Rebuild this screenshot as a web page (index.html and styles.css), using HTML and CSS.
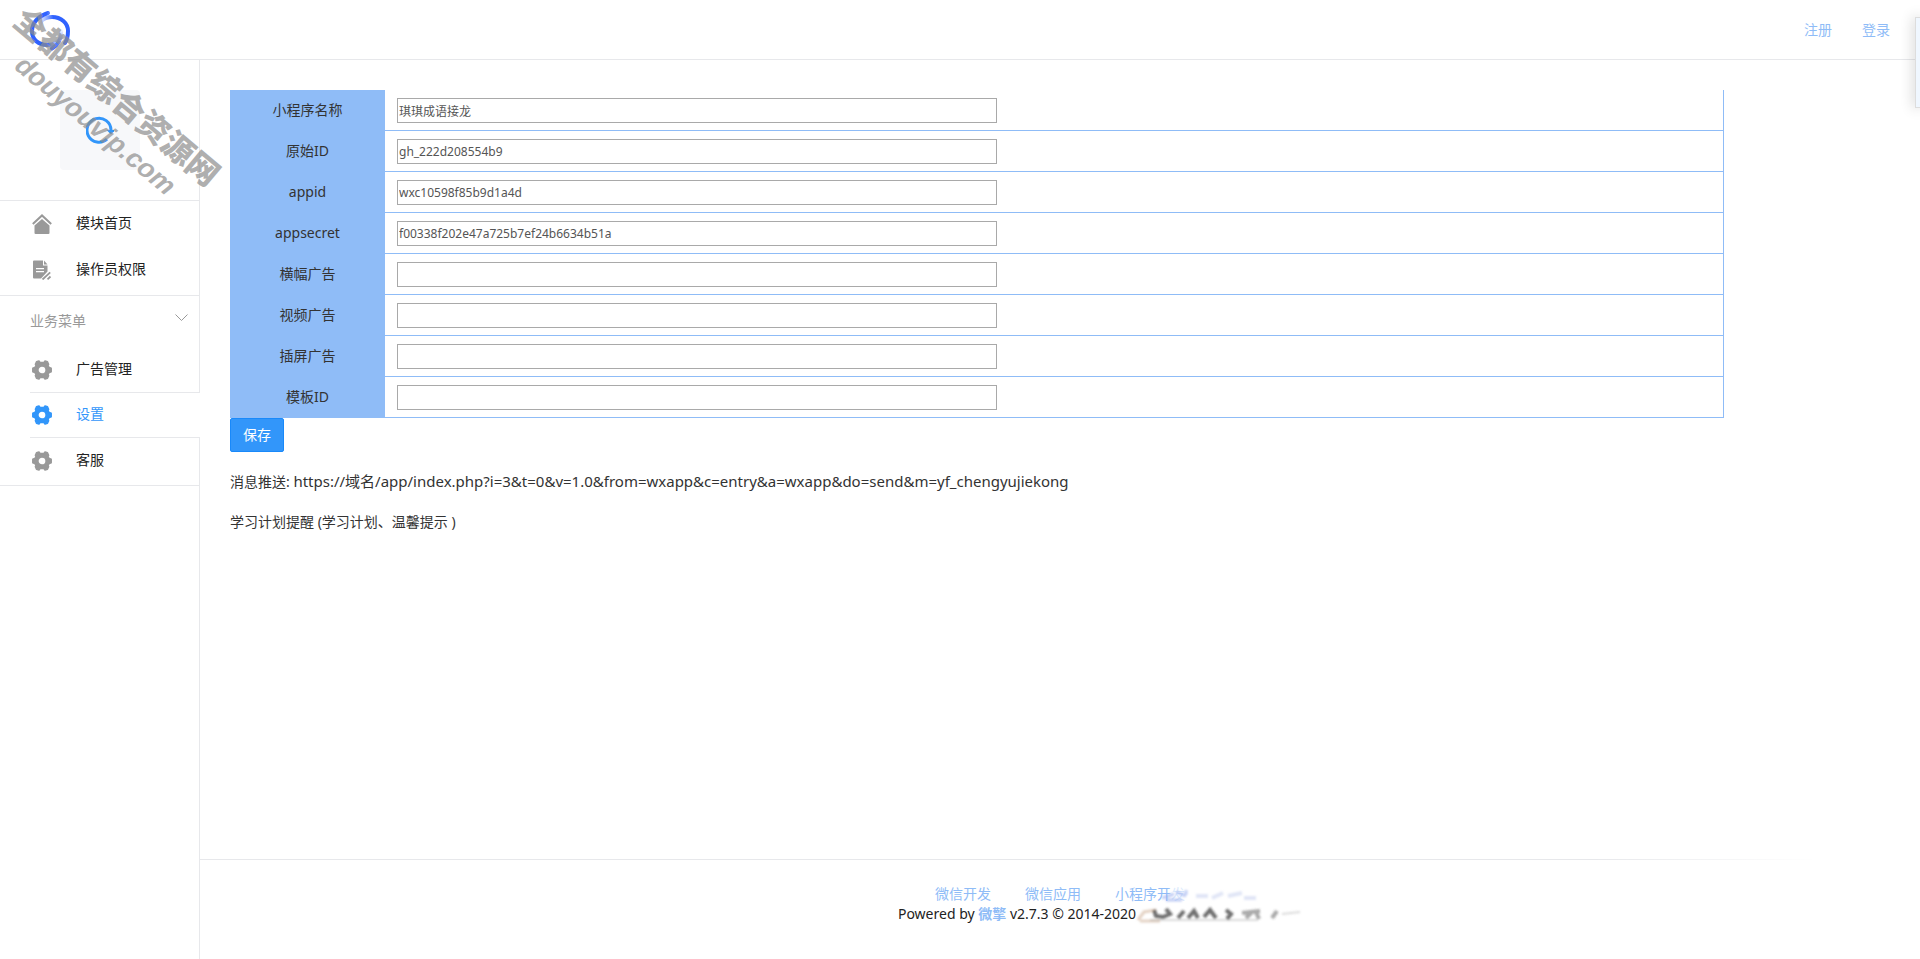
FILE: index.html
```html
<!DOCTYPE html>
<html lang="zh-CN">
<head>
<meta charset="utf-8">
<title>设置</title>
<link rel="stylesheet" href="styles.css">
</head>
<body>
<svg class="defs" aria-hidden="true">
  <symbol id="gear" viewBox="0 0 20 20">
    <path fill="currentColor" stroke="currentColor" stroke-width="1.500" stroke-linejoin="round" fill-rule="evenodd" d="M4.500 1.800L7 1L8.200 2.600H11.800L13 1L15.500 1.800L16.600 4.200L16 6L17.300 7.500L19.200 8.200V11.800L17.300 12.500L16 14L16.600 15.800L15.500 18.200L13 19L11.800 17.400H8.200L7 19L4.500 18.200L3.400 15.800L4 14L2.700 12.500L.8 11.800V8.200L2.700 7.500L4 6L3.400 4.200ZM10 5.900a4.100 4.100 0 1 0 0 8.200a4.100 4.100 0 0 0 0-8.200Z"/>
  </symbol>
</svg>
<header class="topbar">
  <a class="brand" href="#" aria-label="首页">
    <svg class="brand-logo" viewBox="0 0 40 40" fill="none" stroke-linecap="round">
      <defs>
        <linearGradient id="fadeRight" x1="1" y1="0" x2="0" y2="0"><stop offset="0" stop-color="#2f62ff" stop-opacity="0"/><stop offset=".5" stop-color="#2f62ff"/></linearGradient>
        <linearGradient id="fadeLeft" x1="0" y1="0" x2="1" y2="0"><stop offset="0" stop-color="#2f62ff" stop-opacity="0"/><stop offset=".5" stop-color="#2f62ff"/></linearGradient>
        <linearGradient id="fadeTop" x1="0" y1="0" x2="0" y2="1"><stop offset="0" stop-color="#2f62ff" stop-opacity="0"/><stop offset="1" stop-color="#2f62ff"/></linearGradient>
      </defs>
      <path stroke="url(#fadeTop)" stroke-width="4" d="M31 18C32 28 28 34 22 37.500"/>
      <path stroke="url(#fadeRight)" stroke-width="4" d="M18 2C8 5 2 12 2 20C2 29 9 34 17 34C24 34 29 31 31 26"/>
      <path stroke="url(#fadeLeft)" stroke-width="4" d="M9 18C9 10 14 6 22 6C31 6 38 12 38 20C38 25 37 29 35 32"/>
    </svg>
  </a>
  <nav class="account">
    <a href="#">注册</a>
    <a href="#">登录</a>
  </nav>
</header>
<div class="body">
  <aside class="sidebar">
    <div class="module">
      <div class="module-pic">
        <svg viewBox="0 0 28 28" fill="none" stroke="#3296fa" stroke-width="3"><path d="M21 23.200A12 12 0 1 1 25 14"/><path fill="#3296fa" stroke="none" d="M20.500 14H29L25 18.500Z"/></svg>
      </div>
    </div>
    <ul class="menu">
      <li><a href="#"><svg class="ico" viewBox="0 0 20 20"><path d="M10 5L17.500 11.500V19Q17.500 20 16.500 20H3.500Q2.500 20 2.500 19V11.500Z"/><path fill="none" stroke="currentColor" stroke-width="2" d="M.8 10L10 1.400L19.200 10"/></svg><span>模块首页</span></a></li>
      <li><a href="#"><svg class="ico" viewBox="0 0 20 20"><path fill-rule="evenodd" d="M2 .5H11V5.500H15.500V11.500L9 18.500H2Q1 18.500 1 17.500V1.500Q1 .5 2 .5ZM4 8V9.300H12V8ZM4 11V12.300H12V11Z"/><path d="M12 .5L15.500 4.500H12Z"/><path fill="none" stroke="currentColor" stroke-width="1.800" d="M10.500 19.500L18.200 12.300M15.500 19.300L18.500 16.500"/></svg><span>操作员权限</span></a></li>
    </ul>
    <div class="group">
      <button class="group-title" type="button"><span>业务菜单</span><svg class="chev" viewBox="0 0 13 8"><path d="M.5 .5L6.500 6.500L12.500 .5"/></svg></button>
      <ul class="submenu">
        <li><a href="#"><svg class="ico"><use href="#gear"/></svg><span>广告管理</span></a></li>
        <li class="current"><a href="#"><svg class="ico"><use href="#gear"/></svg><span>设置</span></a></li>
        <li><a href="#"><svg class="ico"><use href="#gear"/></svg><span>客服</span></a></li>
      </ul>
    </div>
    <div class="rest"></div>
  </aside>
  <div class="page">
    <main class="content">
      <form>
        <table class="settings">
          <tr><th><label for="f1">小程序名称</label></th><td><input id="f1" type="text" value="琪琪成语接龙"></td></tr>
          <tr><th><label for="f2">原始ID</label></th><td><input id="f2" type="text" value="gh_222d208554b9"></td></tr>
          <tr><th><label for="f3">appid</label></th><td><input id="f3" type="text" value="wxc10598f85b9d1a4d"></td></tr>
          <tr><th><label for="f4">appsecret</label></th><td><input id="f4" type="text" value="f00338f202e47a725b7ef24b6634b51a"></td></tr>
          <tr><th><label for="f5">横幅广告</label></th><td><input id="f5" type="text"></td></tr>
          <tr><th><label for="f6">视频广告</label></th><td><input id="f6" type="text"></td></tr>
          <tr><th><label for="f7">插屏广告</label></th><td><input id="f7" type="text"></td></tr>
          <tr><th><label for="f8">模板ID</label></th><td><input id="f8" type="text"></td></tr>
        </table>
        <button class="save" type="submit">保存</button>
      </form>
      <p>消息推送: <span class="url">https://域名/app/index.php?i=3&amp;t=0&amp;v=1.0&amp;from=wxapp&amp;c=entry&amp;a=wxapp&amp;do=send&amp;m=yf_chengyujiekong</span></p>
      <p>学习计划提醒 (学习计划、温馨提示 )</p>
    </main>
    <footer class="footer">
      <div class="links"><a href="#">微信开发</a><a href="#">微信应用</a><a href="#">小程序开发</a></div>
      <div class="copy">Powered by <a href="#"><b>微擎</b></a> v2.7.3 © 2014-2020
        <svg class="smear" viewBox="0 0 170 50" aria-hidden="true">
          <defs><filter id="soft" x="-10%" y="-30%" width="120%" height="160%"><feGaussianBlur stdDeviation="1.200"/></filter></defs>
          <rect x="38" y="-2" width="30" height="22" fill="#fff" opacity=".7" filter="url(#soft)"/>
          <g fill="none" filter="url(#soft)">
            <path stroke="#8fa6ec" stroke-width="3" opacity=".55" d="M30 14L42 10M34 16H50M44 8L54 12M54 6V11"/>
            <path stroke="#a9b6e6" stroke-width="4" opacity=".35" d="M64 12H76M80 14L91 9M96 12L110 9M112 14H124"/>
            <path stroke="#caa88c" stroke-width="3" opacity=".5" d="M6 36L12 28L24 26M8 37H28"/>
            <path stroke="#333" stroke-width="4" opacity=".7" d="M22 26L24 32L31 33L38 30L34 25M46 34L52 27M56 34L62 27L66 34M72 33L78 26L84 34M94 26L99 30L95 35"/>
            <path stroke="#555" stroke-width="4" opacity=".5" d="M110 29L128 27M114 34L120 28M124 28L127 35M140 34L145 27"/>
            <path stroke="#999" stroke-width="2" opacity=".35" d="M18 36H126M150 30L168 28"/>
          </g>
        </svg>
      </div>
    </footer>
  </div>
</div>
<aside class="dock" aria-hidden="true"></aside>
<div class="watermark" aria-hidden="true"><div class="wm-name">全都有综合资源网</div><div class="wm-site">douyouvip.com</div></div>
</body>
</html>
```
FILE: styles.css
```css
* { box-sizing: border-box; }
body {
  margin: 0;
  min-height: 100vh;
  display: flex;
  flex-direction: column;
  position: relative;
  overflow-x: hidden;
  background: #fff;
  color: #333;
  font: 14px/20px "Noto Sans", "Noto Sans CJK SC", sans-serif;
}
a { color: #8fbcf7; text-decoration: none; }
ul { list-style: none; margin: 0; padding: 0; }
p { margin: 0 0 20px; }
.defs { position: absolute; width: 0; height: 0; }

.topbar {
  display: flex;
  justify-content: space-between;
  align-items: center;
  height: 60px;
  padding: 0 30px;
  border-bottom: 1px solid #e7e8eb;
}
.brand { padding-top: 2px; }
.brand-logo { display: block; width: 40px; height: 40px; }
.account { display: flex; gap: 30px; }

.body { flex: 1; display: flex; }
.sidebar { width: 200px; display: flex; flex-direction: column; }
.module {
  display: flex;
  justify-content: center;
  padding: 30px 0;
  border: solid #e7e8eb;
  border-width: 0 1px 1px 0;
}
.module-pic {
  display: flex;
  align-items: center;
  justify-content: center;
  width: 80px;
  height: 80px;
  border-radius: 4px;
  background: #f7f8fa;
}
.module-pic svg { width: 28px; height: 28px; }
.menu {
  padding-bottom: 2px;
  border: solid #e7e8eb;
  border-width: 0 1px 1px 0;
}
.menu a, .submenu a {
  display: flex;
  align-items: center;
  gap: 24px;
  height: 45px;
  color: #222;
}
.menu a { height: 46px; padding-left: 32px; }
.sidebar span { padding-bottom: 2px; }
.ico { width: 20px; height: 20px; fill: currentColor; color: #999; }
.group { border-bottom: 1px solid #e7e8eb; }
.group-title {
  display: flex;
  align-items: center;
  justify-content: space-between;
  width: 100%;
  height: 51px;
  padding: 0 11px 0 30px;
  border: 0;
  border-right: 1px solid #e7e8eb;
  background: none;
  color: #999;
  font: inherit;
}
.chev { width: 13px; height: 8px; margin-bottom: 8px; fill: none; stroke: #999; }
.submenu li { margin-left: 30px; border-right: 1px solid #e7e8eb; }
.submenu li:last-child { padding-bottom: 2px; }
.submenu a { padding-left: 2px; }
.submenu .current { border: solid #e7e8eb; border-width: 1px 0; }
.submenu .current a { height: 44px; }
.submenu .current a, .current .ico { color: #3296fa; }
.rest { flex: 1; border-right: 1px solid #e7e8eb; }

.page { flex: 1; display: flex; flex-direction: column; }
.content { flex: 1; padding: 30px; }
.settings { width: 90%; border-collapse: separate; border-spacing: 0; }
.settings th {
  width: 155px;
  padding: 0 0 2px;
  background: #8fbcf7;
  font-weight: 400;
  text-align: center;
}
.settings td {
  padding: 8px 12px 7px;
  border: solid #8fbcf7;
  border-width: 0 1px 1px 0;
}
.settings input {
  display: block;
  width: 600px;
  height: 25px;
  padding: 1px;
  border: 1px solid #a9a9a9;
  background: #fff;
  color: #555;
  font: 12px/20px "Noto Sans", "Noto Sans CJK SC", sans-serif;
}
.save {
  display: block;
  height: 34px;
  margin-bottom: 20px;
  padding: 0 12px;
  border: 1px solid #1989fa;
  border-radius: 2px;
  background: #3296fa;
  color: #fff;
  font: inherit;
}
.url { font-size: 15px; line-height: 16px; }
.footer {
  height: 100px;
  padding-top: 25px;
  background: linear-gradient(to right, #e7e8eb 81%, transparent 94%) top / 100% 1px no-repeat;
  color: #222;
  text-align: center;
}
.links { display: flex; justify-content: center; gap: 34px; }
.copy {
  position: relative;
  width: max-content;
  margin: 0 auto;
  padding-right: 86px;
}
.smear { position: absolute; right: -80px; bottom: -10px; width: 170px; height: 50px; }

.dock {
  position: absolute;
  top: 17px;
  right: 0;
  width: 5px;
  height: 91px;
  border: 1px solid #ddd;
  border-right: 0;
  background: #f0f7ff;
  box-shadow: 0 0 14px rgba(0, 0, 0, .3);
}
.watermark {
  position: absolute;
  left: 32px;
  top: -1px;
  transform: rotate(40deg);
  transform-origin: 0 0;
  color: rgba(140, 140, 140, .7);
  font-weight: 900;
  white-space: nowrap;
  pointer-events: none;
}
.wm-name { font-size: 32px; line-height: 40px; }
.wm-site { padding-left: 30px; font: italic 700 27px/32px "Liberation Sans", sans-serif; }
```
